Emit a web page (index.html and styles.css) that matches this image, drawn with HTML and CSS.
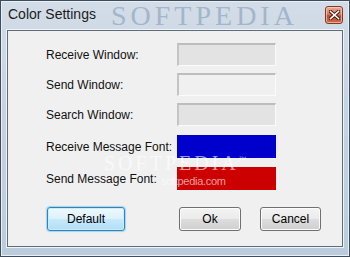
FILE: index.html
```html
<!DOCTYPE html>
<html lang="en">
<head>
  <meta charset="UTF-8">
  <title>Color Settings</title>
  <link rel="stylesheet" href="styles.css">
</head>
<body>
  <div class="window">
    <div class="titlebar">
      <span class="title">Color Settings</span>
      <span class="mark-title">SOFTPEDIA</span>
      <button class="close" title="Close">
        <svg width="11" height="10" viewBox="0 0 11 10">
          <path d="M1.5 1.5 L9.5 8.5 M9.5 1.5 L1.5 8.5" stroke="#3b1a12" stroke-width="3.4" stroke-linecap="square"/>
          <path d="M1.5 1.5 L9.5 8.5 M9.5 1.5 L1.5 8.5" stroke="#ffffff" stroke-width="1.6" stroke-linecap="square"/>
        </svg>
      </button>
    </div>
    <div class="client">
      <div class="settings">
        <div class="row">
          <span class="label">Receive Window:</span>
          <span class="swatch grey"></span>
        </div>
        <div class="row">
          <span class="label">Send Window:</span>
          <span class="swatch light"></span>
        </div>
        <div class="row">
          <span class="label">Search Window:</span>
          <span class="swatch grey"></span>
        </div>
        <div class="row font">
          <span class="label">Receive Message Font:</span>
          <span class="swatch blue"></span>
        </div>
        <div class="row font">
          <span class="label">Send Message Font:</span>
          <span class="swatch red"></span>
        </div>
      </div>
      <div class="actions">
        <button class="btn default">Default</button>
        <button class="btn ok">Ok</button>
        <button class="btn cancel">Cancel</button>
      </div>
      <span class="mark-big">SOFTPEDIA<sup>™</sup></span>
      <span class="mark-small">softpedia.com</span>
    </div>
  </div>
</body>
</html>
```

FILE: styles.css
```css
* { box-sizing: border-box; }
body {
  margin: 0;
  font-family: 'Liberation Sans', Arial, sans-serif;
  background: #ffffff;
}
.window {
  width: 350px;
  height: 257px;
  display: flex;
  flex-direction: column;
  background: linear-gradient(180deg, #d3dde8 0%, #c6d3e0 40%, #bccbdb 100%);
  border: 1px solid #3e4d5e;
  box-shadow: inset 0 0 0 1px #e9eff5;
  padding: 0 6px 9px 6px;
}
.titlebar {
  height: 29px;
  display: flex;
  align-items: center;
  position: relative;
  padding-left: 1px;
  padding-bottom: 3px;
}
.title {
  font-size: 14px;
  color: #1b1b1b;
  position: relative;
  z-index: 1;
}
.mark-title {
  position: absolute;
  left: 104px;
  top: 0;
  font-family: 'Liberation Serif', serif;
  font-size: 28px;
  line-height: 30px;
  letter-spacing: 4px;
  color: #5f7ea3;
  opacity: 0.4;
}
.close {
  margin-left: auto;
  margin-top: 1px;
  width: 18px;
  height: 18px;
  padding: 0;
  display: flex;
  align-items: center;
  justify-content: center;
  border: 1px solid #7b3a2c;
  border-radius: 3px;
  background: linear-gradient(180deg, #ecaa96 0%, #d9765e 45%, #c44a2c 55%, #d6674a 100%);
  box-shadow: inset 0 0 0 1px rgba(255, 220, 205, 0.6);
}
.client {
  flex: 1;
  position: relative;
  background: #f0f0f0;
  border: 1px solid #5e6c7c;
  box-shadow: 0 0 0 1px #eef3f8;
}
.settings {
  display: flex;
  flex-direction: column;
  gap: 7px;
  padding: 12px 0 0 38px;
}
.row {
  display: flex;
  align-items: center;
  height: 23px;
}
.row.font {
  margin-top: 2px;
}
.label {
  width: 131px;
  font-size: 12px;
  color: #111111;
}
.swatch {
  width: 99px;
  height: 23px;
  border-top: 2px solid #bdbdbd;
  border-left: 2px solid #c4c4c4;
  border-bottom: 1px solid #fbfbfb;
  border-right: 1px solid #fbfbfb;
}
.swatch.grey { background: #e3e3e3; }
.swatch.light { background: #f0f0f0; }
.swatch.blue { background: #0000cc; border-color: #0000cc; }
.swatch.red { background: #cc0000; border-color: #cc0000; }
.actions {
  display: flex;
  padding: 0 21px 0 39px;
  margin-top: 17px;
}
.btn {
  height: 24px;
  padding: 0;
  font-family: 'Liberation Sans', Arial, sans-serif;
  font-size: 12px;
  color: #000000;
  border: 1px solid #707070;
  border-radius: 3px;
  background: linear-gradient(180deg, #f3f3f3 0%, #ebebeb 50%, #dddddd 51%, #cfcfcf 100%);
  box-shadow: inset 0 0 0 1px #fcfcfc;
}
.btn.default {
  width: 78px;
  border-color: #3c7fb1;
  background: linear-gradient(180deg, #eef8fe 0%, #dcf1fc 50%, #c6e9fc 51%, #b2def6 100%);
  box-shadow: inset 0 0 0 1px #c8ecfc, 0 0 1px 1px #9ad8f7;
}
.btn.ok {
  width: 62px;
  margin-left: auto;
}
.btn.cancel {
  width: 61px;
  margin-left: 19px;
}
.mark-big {
  position: absolute;
  left: 96px;
  top: 125px;
  font-family: 'Liberation Serif', serif;
  font-size: 20px;
  line-height: 14px;
  letter-spacing: 3px;
  color: #ffffff;
  opacity: 0.6;
}
.mark-big sup {
  font-size: 8px;
  line-height: 0;
  letter-spacing: 0;
}
.mark-small {
  position: absolute;
  left: 153px;
  top: 144px;
  font-size: 11px;
  line-height: 12px;
  letter-spacing: -0.3px;
  color: #ffffff;
  opacity: 0.6;
}
```
